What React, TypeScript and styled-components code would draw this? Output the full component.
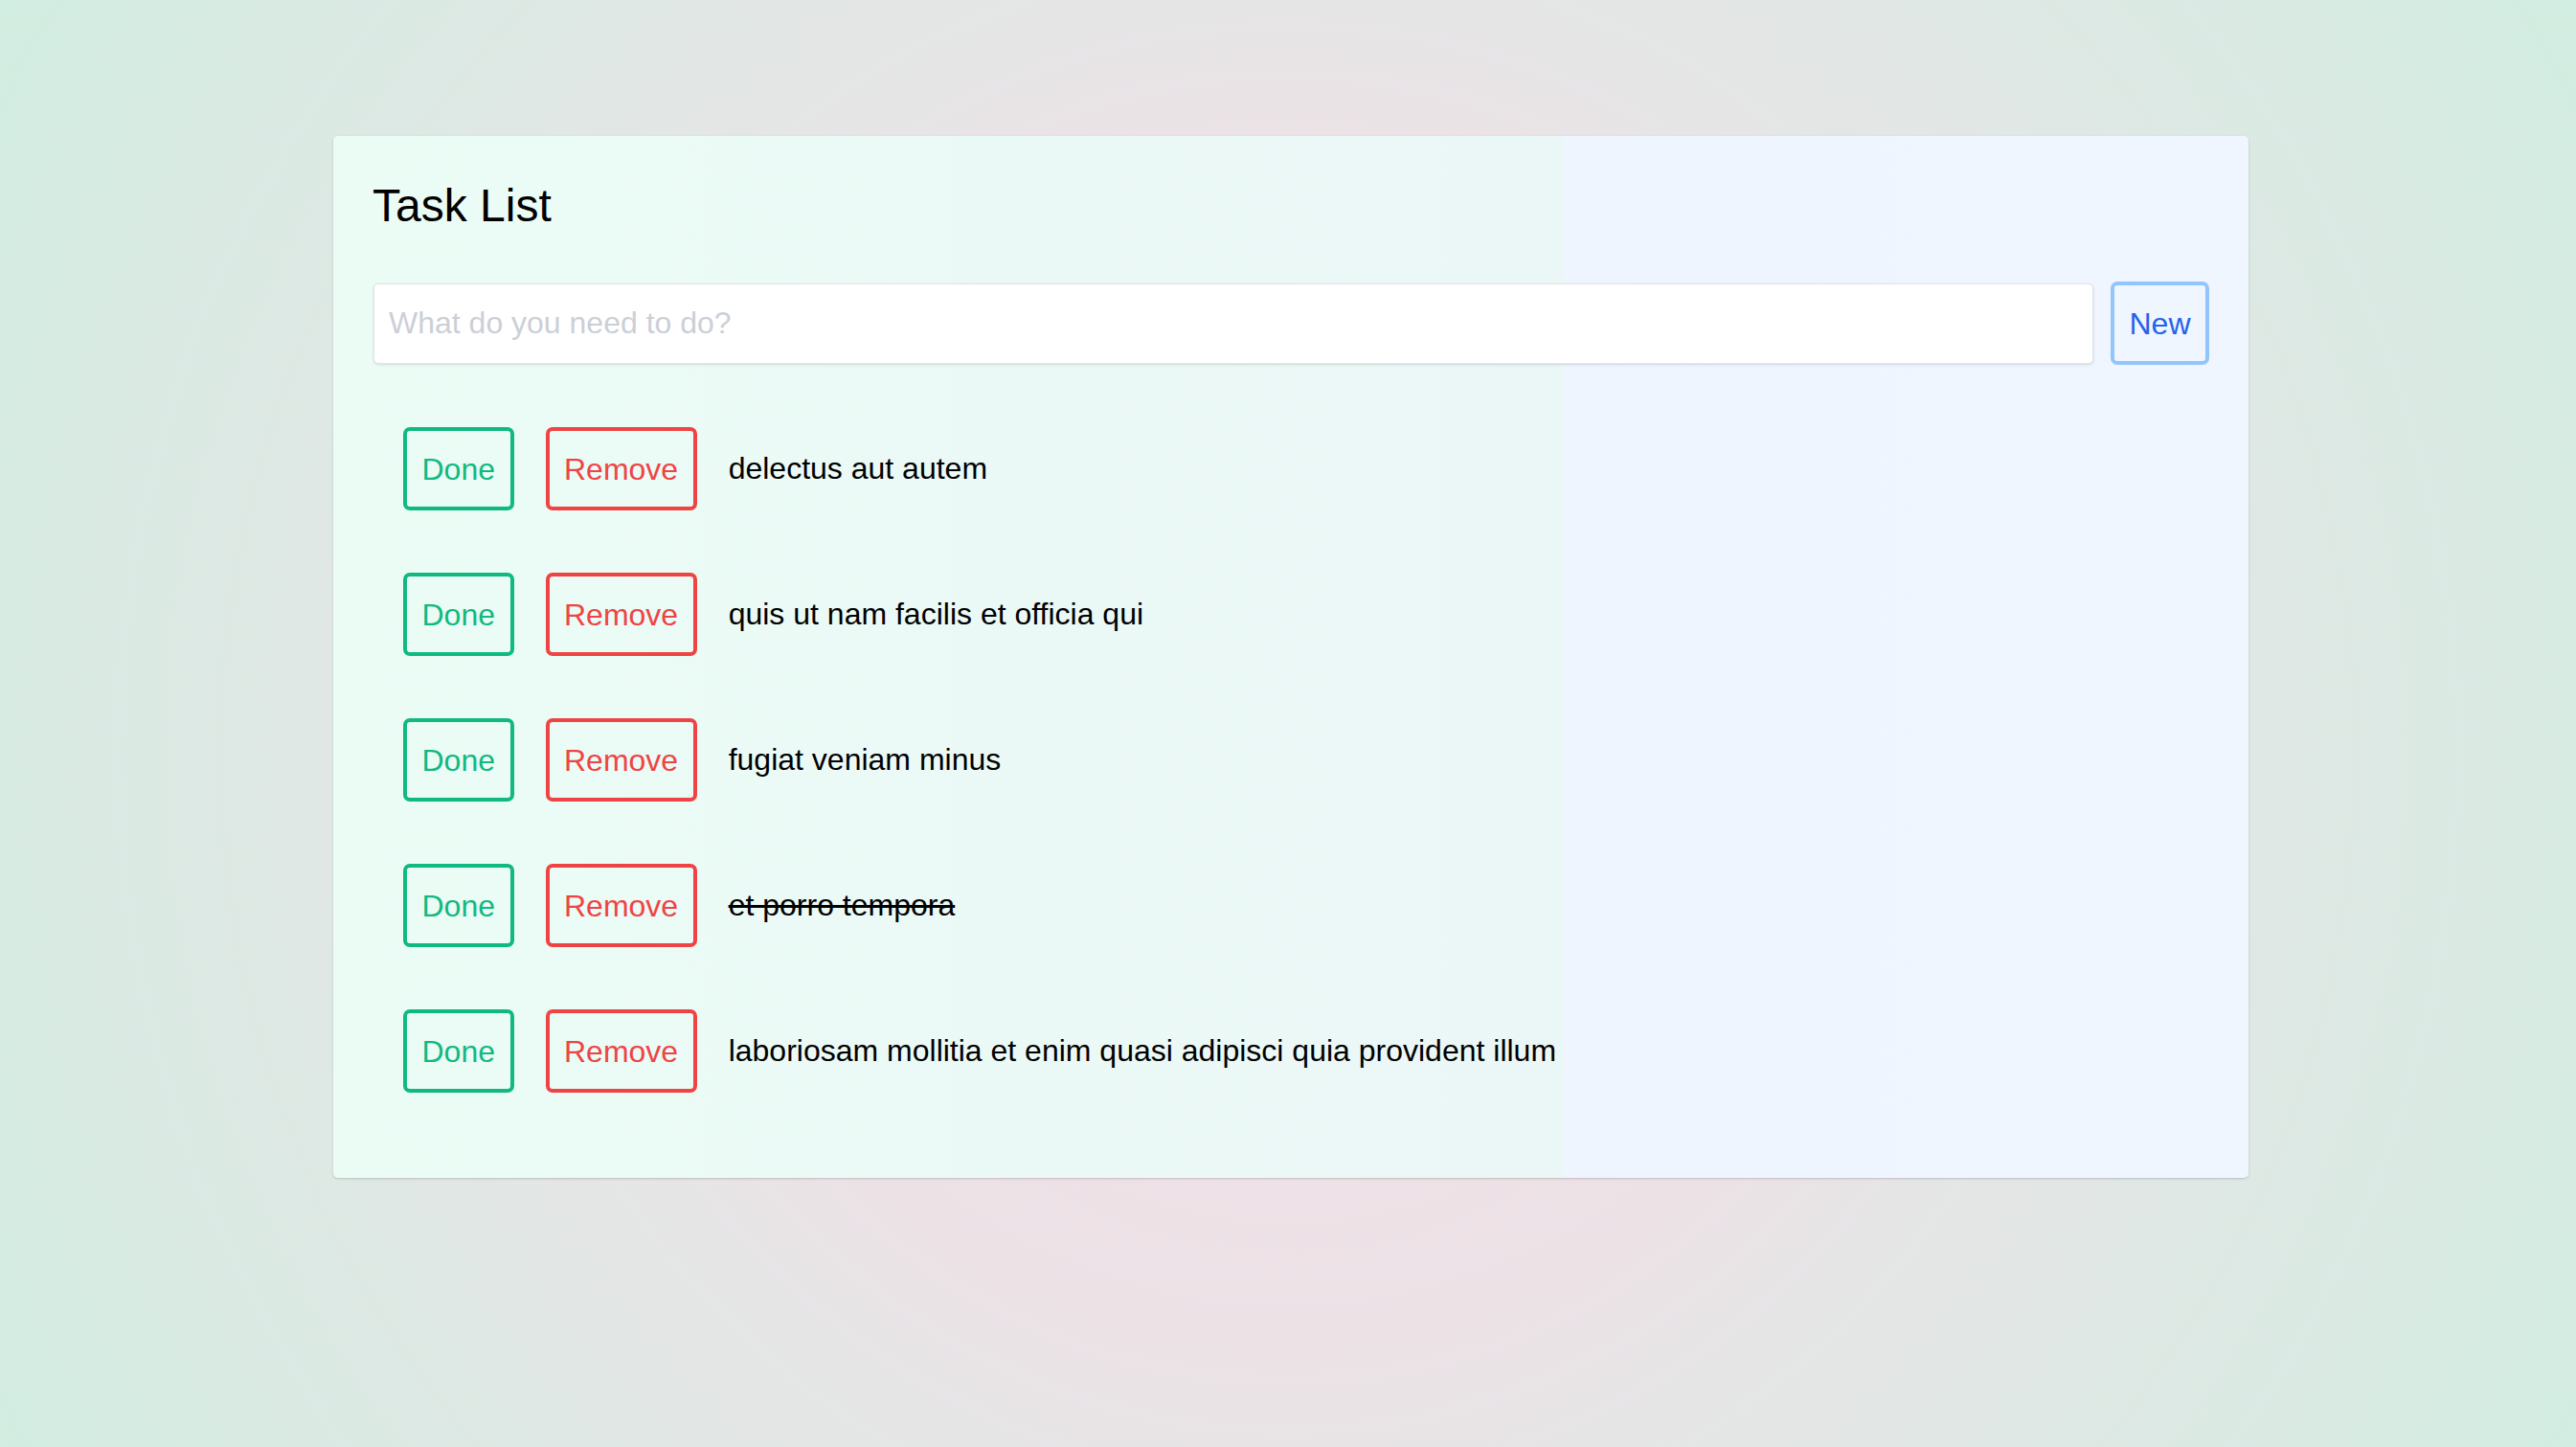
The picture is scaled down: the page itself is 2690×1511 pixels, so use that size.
import React from "react";
import styled, { createGlobalStyle } from "styled-components";

const GlobalStyle = createGlobalStyle`
  html, body {
    margin: 0;
    padding: 0;
  }
  body {
    font-family: "Liberation Sans", Arial, sans-serif;
    min-height: 1511px;
    background: radial-gradient(circle at 50% 52%, #f3dfe9 0%, #ece2e6 40%, #e6e5e6 50%, #d2ede1 100%);
    background-attachment: fixed;
  }
`;

const Page = styled.main`
  min-height: 1511px;
  box-sizing: border-box;
  padding: 142px 0 0 348px;
`;

const Card = styled.section`
  width: 2000px;
  box-sizing: border-box;
  padding: 46px 41px 89px 42px;
  border-radius: 5px;
  background: linear-gradient(
    90deg,
    #ebfcf5 0%,
    #ebf7f7 64.2%,
    #eef5fe 64.2%,
    #eff6ff 100%
  );
  box-shadow: 0 1px 3px rgba(0, 0, 0, 0.12), 0 1px 2px rgba(0, 0, 0, 0.06);
`;

const Title = styled.h1`
  margin: 0 0 0 -1px;
  font-size: 48px;
  line-height: 53px;
  font-weight: 400;
  color: #000000;
`;

const Form = styled.form`
  display: flex;
  align-items: center;
  gap: 18px;
  margin-top: 53px;
`;

const TextInput = styled.input`
  flex: 1;
  height: 84px;
  box-sizing: border-box;
  padding: 0 15px;
  border: 1px solid #e1e3e8;
  border-radius: 5px;
  background: #ffffff;
  box-shadow: 0 1px 3px rgba(0, 0, 0, 0.12);
  font-family: "Liberation Sans", Arial, sans-serif;
  font-size: 32px;
  color: #111;
  outline: none;

  &::placeholder {
    color: #cbcfd7;
  }
`;

type Tone = "blue" | "green" | "red";

const toneColors: Record<Tone, { border: string; text: string }> = {
  blue: { border: "#93c5fd", text: "#2563eb" },
  green: { border: "#10b981", text: "#10b981" },
  red: { border: "#ef4444", text: "#ef4444" },
};

const OutlineButton = styled.button<{ $tone: Tone }>`
  height: 87px;
  box-sizing: border-box;
  padding: 0 15.5px;
  border: 4px solid ${(p) => toneColors[p.$tone].border};
  border-radius: 7px;
  background: transparent;
  color: ${(p) => toneColors[p.$tone].text};
  font-family: "Liberation Sans", Arial, sans-serif;
  font-size: 32px;
  line-height: 1;
  cursor: pointer;
  flex-shrink: 0;
`;

const List = styled.ul`
  list-style: none;
  margin: 65px 0 0;
  padding: 0 0 0 31px;
  display: flex;
  flex-direction: column;
  gap: 65px;
`;

const Row = styled.li`
  display: flex;
  align-items: center;
  gap: 33px;
  height: 87px;
`;

const TaskText = styled.span<{ $done?: boolean }>`
  font-size: 32px;
  color: #000000;
  text-decoration: ${(p) => (p.$done ? "line-through" : "none")};
`;

const tasks = [
  { text: "delectus aut autem", done: false },
  { text: "quis ut nam facilis et officia qui", done: false },
  { text: "fugiat veniam minus", done: false },
  { text: "et porro tempora", done: true },
  { text: "laboriosam mollitia et enim quasi adipisci quia provident illum", done: false },
];

export default function App() {
  return (
    <>
      <GlobalStyle />
      <Page>
        <Card>
          <Title>Task List</Title>
          <Form onSubmit={(e) => e.preventDefault()}>
            <TextInput placeholder="What do you need to do?" />
            <OutlineButton type="submit" $tone="blue">
              New
            </OutlineButton>
          </Form>
          <List>
            {tasks.map((t) => (
              <Row key={t.text}>
                <OutlineButton type="button" $tone="green">
                  Done
                </OutlineButton>
                <OutlineButton type="button" $tone="red">
                  Remove
                </OutlineButton>
                <TaskText $done={t.done}>{t.text}</TaskText>
              </Row>
            ))}
          </List>
        </Card>
      </Page>
    </>
  );
}
